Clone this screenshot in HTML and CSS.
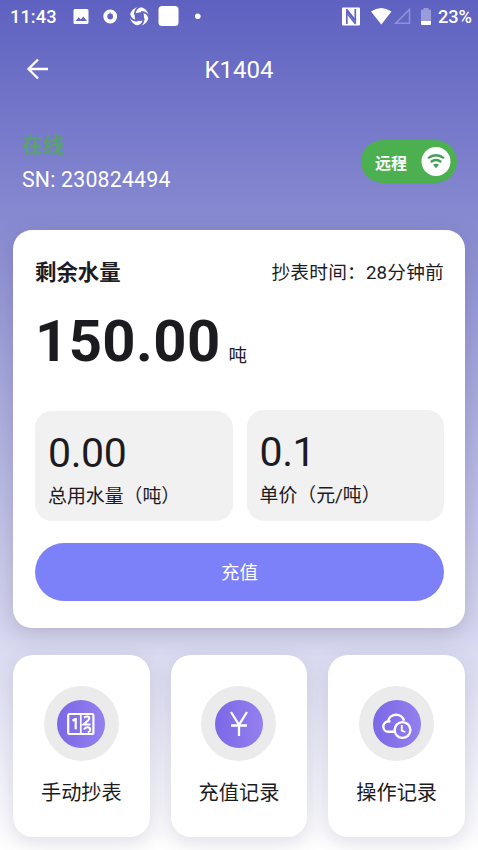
FILE: index.html
```html
<!DOCTYPE html>
<html lang="zh-CN">
<head>
<meta charset="utf-8">
<title>K1404</title>
<link rel="stylesheet" href="styles.css">
</head>
<body>
<div class="screen">
  <div class="status">
    <span class="clock">11:43</span>
    <svg class="status-left" width="140" height="24" viewBox="70 4 140 24">
      <path fill="#fff" fill-rule="evenodd" d="M75 9h12q1.500 0 1.500 1.500v12q0 1.500-1.500 1.500h-12q-1.500 0-1.500-1.500v-12q0-1.500 1.500-1.500zM75.500 21h11.500l-3.700-4.500-2.500 3-2-2.200z"/>
      <circle cx="110.200" cy="16.500" r="4.900" fill="none" stroke="#fff" stroke-width="4"/>
      <path d="M110 12.500v2.500" fill="none" stroke="#6265c2" stroke-width="1"/>
      <circle cx="139.300" cy="16.300" r="9.300" fill="#fff"/>
      <g fill="none" stroke="#6265c2" stroke-width="1.800">
        <path id="blade" d="M140.500 6.500Q135 8 134.800 14.500"/>
        <use href="#blade" transform="rotate(90 139.300 16.300)"/>
        <use href="#blade" transform="rotate(180 139.300 16.300)"/>
        <use href="#blade" transform="rotate(270 139.300 16.300)"/>
      </g>
      <path fill="#6265c2" d="M134.500 13.500l4.500-1 4.500-.500.500 5-.500 3.500-5 .500-3.500-1.500z"/>
      <rect x="158.500" y="6" width="20" height="20" rx="3.500" fill="#fff"/>
      <circle cx="197.800" cy="16.300" r="2.800" fill="#fff"/>
    </svg>
    <svg class="status-right" width="96" height="24" viewBox="340 4 96 24">
      <rect x="342" y="7.500" width="18" height="18" rx="1" fill="#fff"/>
      <path d="M346.800 24V11L355.300 21.500V9" fill="none" stroke="#6265c2" stroke-width="1.700"/>
      <path d="M346.500 9l8 10M347.500 14l8 10" fill="none" stroke="#6265c2" stroke-width="1.300"/>
      <path fill="#fff" d="M371 11.500q10-7 20.500 0L381.300 24.500z"/>
      <path fill="none" stroke="#8f91d6" stroke-width="1.600" d="M395.800 23.200h13.700V9.500z"/>
      <path fill="#9a9cd9" d="M423.500 8h5v1.800h2.500V21h-10V9.800h2.500z"/>
      <path fill="#fff" d="M421 21h10v3q0 1-1 1h-8q-1 0-1-1z"/>
    </svg>
    <span class="battery">23%</span>
  </div>

  <div class="appbar">
    <svg class="back" width="24" height="24" viewBox="0 0 24 24"><path d="M23 11H3.500M13 1.500L3.500 11l9.500 9.500" fill="none" stroke="#fff" stroke-width="2.300"/></svg>
    <h1 class="title">K1404</h1>
  </div>

  <div class="device">
    <div>
      <div class="online">在线</div>
      <div class="sn">SN: 230824494</div>
    </div>
    <div class="remote">
      <span>远程</span>
      <svg width="30" height="30" viewBox="0 0 30 30">
        <circle cx="15" cy="14.500" r="14.500" fill="#fff"/>
        <g fill="none" stroke="#43a057" stroke-width="2.300">
          <path d="M7 11.200q8-6 16 0"/>
          <path d="M9.800 15q5.200-4 10.400 0"/>
        </g>
        <path fill="#43a057" d="M12 17.800q3-2 6 0L15 21.300z"/>
      </svg>
    </div>
  </div>

  <div class="card">
    <div class="card-head">
      <h2>剩余水量</h2>
      <span class="reading">抄表时间：28分钟前</span>
    </div>
    <div class="amount"><span class="value">150.00</span><span class="unit">吨</span></div>
    <div class="stats">
      <div class="stat"><div class="num">0.00</div><div class="label">总用水量（吨）</div></div>
      <div class="stat stat-price"><div class="num">0.1</div><div class="label">单价（元/吨）</div></div>
    </div>
    <button class="recharge">充值</button>
  </div>

  <div class="tiles">
    <div class="tile">
      <div class="ring"><div class="disc">
        <svg width="48" height="48" viewBox="0 0 48 48" fill="none" stroke="#fff">
          <rect x="11.200" y="14" width="25.200" height="20" rx="1.500" stroke-width="2.200"/>
          <path d="M23.800 14v20" stroke-width="1.700"/>
          <path d="M15.500 20.700l2.600-1.500h.6v10" stroke-width="2.200"/>
          <path d="M27 17.500q3-1.500 5-.5 1 1.500-1 3.500l-4.500 4h7M27 29.500q1-2.300 3.500-2.200 2.700.3 2.700 2.400 0 1.600-2.400 2.600" stroke-width="2"/>
        </svg>
      </div></div>
      <span class="tile-label">手动抄表</span>
    </div>
    <div class="tile">
      <div class="ring"><div class="disc">
        <svg width="48" height="48" viewBox="0 0 48 48" fill="none" stroke="#fff" stroke-width="2.300">
          <path d="M16 12l8 12.800L32 12M24 24v12M16 25.500h16"/>
        </svg>
      </div></div>
      <span class="tile-label">充值记录</span>
    </div>
    <div class="tile">
      <div class="ring"><div class="disc">
        <svg width="48" height="48" viewBox="0 0 48 48" fill="none" stroke="#fff" stroke-width="2.400">
          <path d="M21 31.800H15.300a5.200 5.200 0 0 1-.8-10.300q1.800-.3 3 .2M15 21.500a8.200 8.200 0 0 1 16-.7"/>
          <circle cx="29.500" cy="30" r="7.900"/>
          <path d="M28.800 25v5.500l3.500 1.500" stroke-width="1.900"/>
        </svg>
      </div></div>
      <span class="tile-label">操作记录</span>
    </div>
  </div>
</div>
</body>
</html>
```
FILE: styles.css
```css
* { box-sizing: border-box; }
body { margin: 0; font-family: Roboto, "Noto Sans CJK SC", sans-serif; color: #1c1b1f; }
.screen {
  height: 850px;
  overflow: hidden;
  background: linear-gradient(#5e61c0, #fff);
}
h1, h2 { margin: 0; font-weight: 400; }
svg { display: block; flex: none; }

.status { display: flex; height: 32px; padding: 4px 6px 0 10px; color: #fff; font-size: 18.200px; line-height: 26px; font-weight: 500; }
.clock { width: 60px; letter-spacing: 0.1px; }
.battery { margin-left: auto; letter-spacing: 0; }
.status-right { margin-left: 130px; }

.appbar { display: grid; grid-template-columns: 1fr auto 1fr; align-items: center; height: 76px; padding: 0 25px; color: #fff; }
.title { font-size: 24px; line-height: 32px; }

.device { display: flex; justify-content: space-between; height: 122px; padding: 21px 21px 0 22px; }
.online { color: #4caf50; opacity: 0.75; font-size: 21px; line-height: 32px; font-weight: 700; }
.sn { margin-top: 6px; color: #fff; font-size: 21.300px; line-height: 26px; letter-spacing: 0.2px; }
.remote { display: flex; align-items: center; justify-content: space-between; width: 96px; height: 43px; margin-top: 11px; padding: 0 6px 0 14px; border-radius: 22px; background: #4caf50; color: #fff; font-size: 16px; font-weight: 700; }

.card { height: 398px; margin: 0 13px; padding: 26px 21px 0 22px; border-radius: 19px; background: #fff; box-shadow: 0 6px 22px rgba(80, 70, 110, 0.24); }
.card-head { display: flex; justify-content: space-between; height: 34px; line-height: 34px; }
.card-head h2 { font-size: 21.400px; font-weight: 700; }
.reading { font-size: 18.700px; letter-spacing: 0.2px; }
.amount { display: flex; align-items: baseline; height: 120px; padding-top: 16px; }
.value { font-size: 58px; line-height: 70px; font-weight: 700; letter-spacing: 0.4px; }
.unit { position: relative; top: 1px; margin-left: 8px; font-size: 18.500px; }
.stats { display: grid; grid-template-columns: 1fr 1fr; gap: 14px; align-items: center; height: 111px; }
.stat { height: 110px; padding: 17px 14px 0 13px; border-radius: 17px; background: #f1f1f1; }
.stat-price { height: 111px; }
.num { font-size: 41px; line-height: 50px; letter-spacing: -0.4px; }
.label { margin-top: 5px; font-size: 18.900px; line-height: 28px; }
.recharge { display: block; width: 100%; height: 58px; margin-top: 22px; padding: 0; border: 0; border-radius: 29px; background: #7d81f9; color: #fff; font: 400 18.500px/60px Roboto, "Noto Sans CJK SC", sans-serif; }

.tiles { display: grid; grid-template-columns: repeat(3, 1fr); gap: 21px; margin: 27px 13px 0; }
.tile { display: flex; flex-direction: column; align-items: center; height: 182px; padding-top: 31px; border-radius: 20px; background: #fff; box-shadow: 0 6px 20px rgba(80, 70, 110, 0.17); }
.ring { display: grid; place-items: center; width: 75px; height: 75px; border-radius: 50%; background: #ebebeb; }
.disc { width: 48px; height: 48px; border-radius: 50%; background: linear-gradient(90deg, #7a68e6, #9480ee); }
.tile-label { margin-top: 17px; font-size: 20.200px; line-height: 30px; }
```
